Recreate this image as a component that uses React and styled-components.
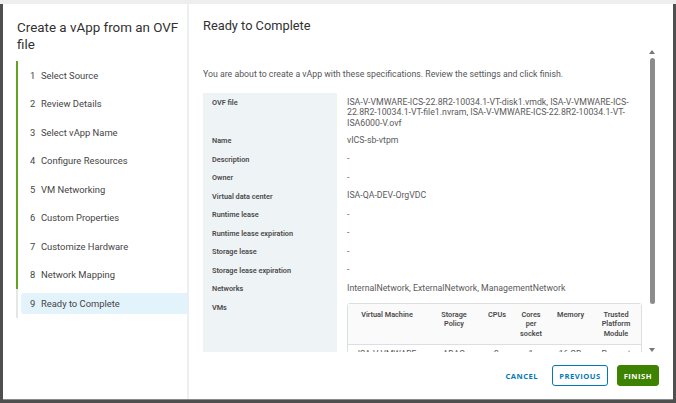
import React from "react";
import styled, { createGlobalStyle } from "styled-components";

const GlobalStyle = createGlobalStyle`
  html, body {
    margin: 0;
    padding: 0;
    background: #4f4f4f;
  }
  body {
    font-family: Roboto, "Open Sans", "Liberation Sans", sans-serif;
    color: #565656;
  }
`;

const steps = [
  "Select Source",
  "Review Details",
  "Select vApp Name",
  "Configure Resources",
  "VM Networking",
  "Custom Properties",
  "Customize Hardware",
  "Network Mapping",
  "Ready to Complete",
];

const specs = [
  {
    label: "OVF file",
    value:
      "ISA-V-VMWARE-ICS-22.8R2-10034.1-VT-disk1.vmdk, ISA-V-VMWARE-ICS-22.8R2-10034.1-VT-file1.nvram, ISA-V-VMWARE-ICS-22.8R2-10034.1-VT-ISA6000-V.ovf",
  },
  { label: "Name", value: "vICS-sb-vtpm" },
  { label: "Description", value: "-" },
  { label: "Owner", value: "-" },
  { label: "Virtual data center", value: "ISA-QA-DEV-OrgVDC" },
  { label: "Runtime lease", value: "-" },
  { label: "Runtime lease expiration", value: "-" },
  { label: "Storage lease", value: "-" },
  { label: "Storage lease expiration", value: "-" },
  { label: "Networks", value: "InternalNetwork, ExternalNetwork, ManagementNetwork" },
];

const vmCols = [
  { title: "Virtual Machine", width: 78 },
  { title: "Storage Policy", width: 56 },
  { title: "CPUs", width: 29 },
  { title: "Cores per socket", width: 40 },
  { title: "Memory", width: 38 },
  { title: "Trusted Platform Module", width: 54 },
];

const vmRow = ["ISA-V-VMWARE", "ADAG", "2", "1", "16 GB", "Present"];

function App() {
  return (
    <>
      <GlobalStyle />
      <Page>
        <Modal>
          <Sidebar>
            <WizardTitle>Create a vApp from an OVF file</WizardTitle>
            <StepList>
              {steps.map((s, i) => (
                <Step key={s} done={i < steps.length - 1}>
                  <StepInner active={i === steps.length - 1}>
                    <span className="num">{i + 1}</span>
                    <span>{s}</span>
                  </StepInner>
                </Step>
              ))}
            </StepList>
          </Sidebar>
          <Main>
            <PageTitle>Ready to Complete</PageTitle>
            <Body>
              <Content>
                <Intro>
                  You are about to create a vApp with these specifications. Review the settings and click finish.
                </Intro>
                <SpecGrid>
                  {specs.map((r) => (
                    <React.Fragment key={r.label}>
                      <Label>{r.label}</Label>
                      <Value>{r.value}</Value>
                    </React.Fragment>
                  ))}
                  <Label>VMs</Label>
                  <Value>
                    <VmTable>
                      <VmRow head>
                        {vmCols.map((c) => (
                          <VmCell key={c.title} w={c.width} head>
                            {c.title}
                          </VmCell>
                        ))}
                      </VmRow>
                      <VmRow>
                        {vmRow.map((v, i) => (
                          <VmCell key={i} w={vmCols[i].width}>
                            {v}
                          </VmCell>
                        ))}
                      </VmRow>
                    </VmTable>
                  </Value>
                </SpecGrid>
              </Content>
              <ScrollBar>
                <svg width="6" height="4" viewBox="0 0 6 4">
                  <path d="M3 0 L6 4 L0 4 Z" fill="#777" />
                </svg>
                <Thumb />
                <svg width="6" height="4" viewBox="0 0 6 4">
                  <path d="M0 0 L6 0 L3 4 Z" fill="#777" />
                </svg>
              </ScrollBar>
            </Body>
            <Footer>
              <FlatButton>Cancel</FlatButton>
              <OutlineButton>Previous</OutlineButton>
              <PrimaryButton>Finish</PrimaryButton>
            </Footer>
          </Main>
        </Modal>
      </Page>
    </>
  );
}

const Page = styled.div`
  width: 676px;
  height: 403px;
  box-sizing: border-box;
  border-top: 4px solid #eeeeee;
  padding: 0 3px 3px 3px;
  background: #4f4f4f;
  overflow: hidden;
`;

const Modal = styled.div`
  display: flex;
  height: 396px;
  background: #ffffff;
  border-bottom: 1px solid #8a8a8a;
  box-sizing: border-box;
`;

const Sidebar = styled.div`
  width: 184px;
  flex-shrink: 0;
  border-right: 2px solid #eceff1;
  padding-top: 15px;
`;

const WizardTitle = styled.div`
  font-size: 13.4px;
  line-height: 17px;
  color: #313131;
  padding: 0 0 0 14px;
  height: 42px;
`;

const StepList = styled.div`
  margin-left: 13px;
`;

const Step = styled.div`
  height: 28.5px;
  box-sizing: border-box;
  border-left: 2px solid ${(p) => (p.done ? "#62a420" : "#e4e7e9")};
  padding: 4px 0 4px 3px;
`;

const StepInner = styled.div`
  display: flex;
  align-items: center;
  height: 100%;
  padding-left: 9px;
  font-size: 9.4px;
  color: #454545;
  background: ${(p) => (p.active ? "#e3f3fc" : "transparent")};
  border-radius: 3px 0 0 3px;
  .num {
    width: 11px;
  }
`;

const Main = styled.div`
  flex: 1;
  display: flex;
  flex-direction: column;
  min-width: 0;
`;

const PageTitle = styled.div`
  font-size: 12.8px;
  line-height: 17px;
  color: #313131;
  padding: 13px 14px 0;
  height: 28px;
`;

const Body = styled.div`
  display: flex;
  height: 307px;
  padding-left: 14px;
`;

const Content = styled.div`
  width: 439px;
  overflow: hidden;
  padding-top: 23px;
`;

const Intro = styled.div`
  font-size: 8.75px;
  line-height: 12px;
  margin-bottom: 13px;
  white-space: nowrap;
`;

const SpecGrid = styled.div`
  display: grid;
  grid-template-columns: 134px 1fr;
`;

const Label = styled.div`
  background: #eef3f6;
  padding: 5px 0 3px 9px;
  font-size: 7.3px;
  line-height: 10.5px;
  font-weight: 600;
  color: #4a4a4a;
  &:nth-last-child(2) {
    min-height: 60px;
  }
`;

const Value = styled.div`
  padding: 3.5px 6px 3px 10px;
  font-size: 8.75px;
  line-height: 10.5px;
  color: #5b5b5b;
`;

const VmTable = styled.div`
  margin-top: 2px;
  border: 1px solid #dcdfe2;
  border-radius: 3px;
  width: 295px;
  box-sizing: border-box;
`;

const VmRow = styled.div`
  display: flex;
  background: ${(p) => (p.head ? "#fafafa" : "#ffffff")};
  border-bottom: ${(p) => (p.head ? "1px solid #dcdfe2" : "none")};
  padding: ${(p) => (p.head ? "6px 0 6px" : "5px 0")};
`;

const VmCell = styled.div`
  width: ${(p) => p.w}px;
  flex-shrink: 0;
  text-align: center;
  font-size: ${(p) => (p.head ? "7.3px" : "8.5px")};
  line-height: 9.3px;
  font-weight: ${(p) => (p.head ? 600 : 400)};
  color: ${(p) => (p.head ? "#4a4a4a" : "#5b5b5b")};
  padding: 0 6px;
  box-sizing: border-box;
  white-space: ${(p) => (p.head ? "normal" : "nowrap")};
  overflow: ${(p) => (p.head ? "visible" : "hidden")};
`;

const ScrollBar = styled.div`
  width: 12px;
  margin-left: 4px;
  display: flex;
  flex-direction: column;
  align-items: center;
  padding-top: 5px;
  gap: 4px;
  svg {
    display: block;
  }
  svg:last-child {
    margin-top: 40px;
  }
`;

const Thumb = styled.div`
  width: 5px;
  height: 248px;
  border-radius: 3px;
  background: #8c8c8c;
`;

const Footer = styled.div`
  flex: 1;
  display: flex;
  align-items: center;
  justify-content: flex-end;
  gap: 9px;
  padding-right: 14px;
`;

const ButtonBase = styled.button`
  height: 21px;
  border-radius: 3px;
  font-family: "Open Sans", "Liberation Sans", sans-serif;
  font-size: 7.6px;
  font-weight: 700;
  letter-spacing: 0.5px;
  text-transform: uppercase;
  padding: 0 6px;
  cursor: pointer;
`;

const FlatButton = styled(ButtonBase)`
  background: transparent;
  border: 1px solid transparent;
  color: #0079b8;
  margin-right: -2px;
`;

const OutlineButton = styled(ButtonBase)`
  background: #fff;
  border: 1px solid #0079b8;
  color: #0079b8;
`;

const PrimaryButton = styled(ButtonBase)`
  background: #3d8201;
  border: 1px solid #3d8201;
  color: #fff;
`;

export default App;
